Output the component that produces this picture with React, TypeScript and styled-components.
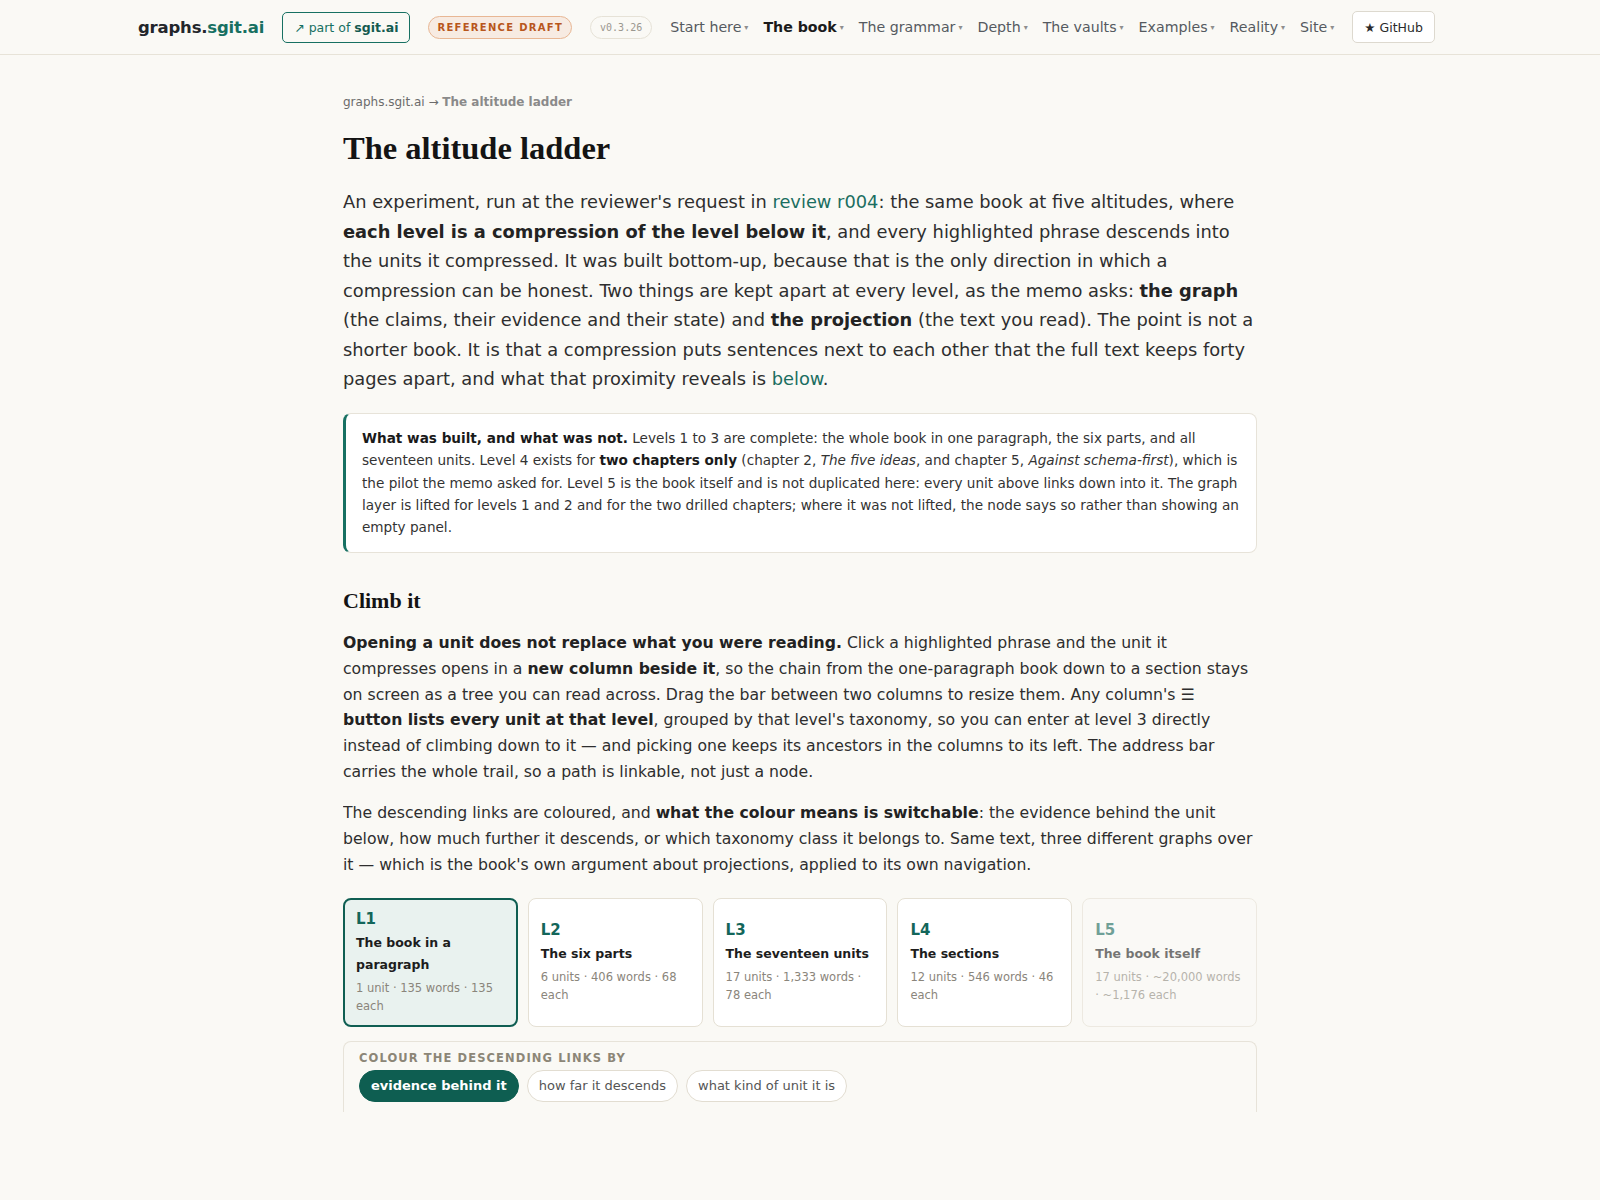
import React, { useState } from "react";
import styled, { createGlobalStyle } from "styled-components";

const GlobalStyle = createGlobalStyle`
  html, body {
    margin: 0;
    padding: 0;
    background: #faf9f5;
  }
  body {
    font-family: "DejaVu Sans", "Noto Sans", sans-serif;
    color: #2b2b2b;
  }
  * { box-sizing: border-box; }
`;

const NAV = [
  { label: "Start here" },
  { label: "The book", active: true },
  { label: "The grammar" },
  { label: "Depth" },
  { label: "The vaults" },
  { label: "Examples" },
  { label: "Reality" },
  { label: "Site" },
];

const LEVELS = [
  { id: "L1", title: "The book in a paragraph", meta: "1 unit · 135 words · 135 each" },
  { id: "L2", title: "The six parts", meta: "6 units · 406 words · 68 each" },
  { id: "L3", title: "The seventeen units", meta: "17 units · 1,333 words · 78 each" },
  { id: "L4", title: "The sections", meta: "12 units · 546 words · 46 each" },
  { id: "L5", title: "The book itself", meta: "17 units · ~20,000 words · ~1,176 each", faded: true },
];

const MODES = ["evidence behind it", "how far it descends", "what kind of unit it is"];

function App() {
  const [level, setLevel] = useState("L1");
  const [mode, setMode] = useState(MODES[0]);

  return (
    <>
      <GlobalStyle />
      <Header>
        <HeaderInner>
          <Logo>
            graphs.<LogoAccent>sgit.ai</LogoAccent>
          </Logo>
          <PartOf href="#">
            ↗ part of <b>sgit.ai</b>
          </PartOf>
          <DraftBadge>REFERENCE DRAFT</DraftBadge>
          <VersionBadge>v0.3.26</VersionBadge>
          <Nav>
            {NAV.map((n) => (
              <NavItem key={n.label} active={!!n.active}>
                {n.label}
                <Caret>▾</Caret>
              </NavItem>
            ))}
          </Nav>
          <GitHubButton href="#">★ GitHub</GitHubButton>
        </HeaderInner>
      </Header>

      <Main>
        <Breadcrumb>
          graphs.sgit.ai → <b>The altitude ladder</b>
        </Breadcrumb>
        <Title>The altitude ladder</Title>

        <Lead>
          An experiment, run at the reviewer's request in <Link href="#">review r004</Link>: the
          same book at five altitudes, where <b>each level is a compression of the level below it</b>,
          and every highlighted phrase descends into the units it compressed. It was built
          bottom-up, because that is the only direction in which a compression can be honest. Two
          things are kept apart at every level, as the memo asks: <b>the graph</b> (the claims,
          their evidence and their state) and <b>the projection</b> (the text you read). The point
          is not a shorter book. It is that a compression puts sentences next to each other that
          the full text keeps forty pages apart, and what that proximity reveals is{" "}
          <Link href="#">below</Link>.
        </Lead>

        <Callout>
          <b>What was built, and what was not.</b> Levels 1 to 3 are complete: the whole book in one
          paragraph, the six parts, and all seventeen units. Level 4 exists for{" "}
          <b>two chapters only</b> (chapter 2, <i>The five ideas</i>, and chapter 5,{" "}
          <i>Against schema-first</i>), which is the pilot the memo asked for. Level 5 is the book
          itself and is not duplicated here: every unit above links down into it. The graph layer is
          lifted for levels 1 and 2 and for the two drilled chapters; where it was not lifted, the
          node says so rather than showing an empty panel.
        </Callout>

        <SectionTitle>Climb it</SectionTitle>

        <Para>
          <b>Opening a unit does not replace what you were reading.</b> Click a highlighted phrase
          and the unit it compresses opens in a <b>new column beside it</b>, so the chain from the
          one-paragraph book down to a section stays on screen as a tree you can read across. Drag
          the bar between two columns to resize them. Any column's ☰{" "}
          <b>button lists every unit at that level</b>, grouped by that level's taxonomy, so you can
          enter at level 3 directly instead of climbing down to it — and picking one keeps its
          ancestors in the columns to its left. The address bar carries the whole trail, so a path
          is linkable, not just a node.
        </Para>
        <Para>
          The descending links are coloured, and <b>what the colour means is switchable</b>: the
          evidence behind the unit below, how much further it descends, or which taxonomy class it
          belongs to. Same text, three different graphs over it — which is the book's own argument
          about projections, applied to its own navigation.
        </Para>

        <LevelGrid>
          {LEVELS.map((l) => (
            <LevelCard
              key={l.id}
              selected={level === l.id}
              faded={!!l.faded}
              onClick={() => setLevel(l.id)}
            >
              <LevelId>{l.id}</LevelId>
              <LevelTitle>{l.title}</LevelTitle>
              <LevelMeta>{l.meta}</LevelMeta>
            </LevelCard>
          ))}
        </LevelGrid>

        <ColourPanel>
          <PanelLabel>Colour the descending links by</PanelLabel>
          <PillRow>
            {MODES.map((m) => (
              <Pill key={m} active={mode === m} onClick={() => setMode(m)}>
                {m}
              </Pill>
            ))}
          </PillRow>
        </ColourPanel>
      </Main>
    </>
  );
}

const Header = styled.header`
  height: 55px;
  border-bottom: 1px solid #e7e3d8;
  background: #faf9f5;
`;

const HeaderInner = styled.div`
  height: 100%;
  padding: 0 138px;
  display: flex;
  align-items: center;
  gap: 18px;
  white-space: nowrap;
  & > * {
    flex-shrink: 0;
  }
`;

const Logo = styled.div`
  font-size: 16.5px;
  font-weight: 700;
  color: #23262b;
  letter-spacing: -0.2px;
`;

const LogoAccent = styled.span`
  color: #177062;
`;

const PartOf = styled.a`
  height: 31px;
  padding: 0 11px;
  display: flex;
  align-items: center;
  gap: 4px;
  border: 1px solid #177062;
  border-radius: 5px;
  color: #177062;
  font-size: 12.5px;
  text-decoration: none;
  b {
    color: #145a50;
  }
`;

const DraftBadge = styled.span`
  height: 23px;
  padding: 0 8px;
  display: flex;
  align-items: center;
  border: 1px solid #e8b794;
  background: #f7ebe2;
  border-radius: 12px;
  color: #b8561c;
  font-size: 10px;
  font-weight: 700;
  letter-spacing: 1.3px;
`;

const VersionBadge = styled.span`
  height: 23px;
  padding: 0 9px;
  display: flex;
  align-items: center;
  border: 1px solid #e6e2d7;
  border-radius: 12px;
  color: #9a978f;
  font-family: "DejaVu Sans Mono", "Liberation Mono", monospace;
  font-size: 10px;
`;

const Nav = styled.nav`
  display: flex;
  align-items: center;
  gap: 15px;
`;

const NavItem = styled.span<{ active: boolean }>`
  font-size: 14.2px;
  color: ${(p) => (p.active ? "#1b1b1b" : "#555a60")};
  font-weight: ${(p) => (p.active ? 700 : 400)};
  cursor: pointer;
`;

const Caret = styled.span`
  font-size: 8px;
  margin-left: 3px;
  color: #8e8e8e;
  vertical-align: 2px;
  font-weight: 400;
`;

const GitHubButton = styled.a`
  height: 32px;
  padding: 0 11px;
  display: flex;
  align-items: center;
  border: 1px solid #ddd9cf;
  border-radius: 5px;
  background: #fff;
  color: #2a2a2a;
  font-size: 12.5px;
  text-decoration: none;
`;

const Main = styled.main`
  width: 914px;
  margin: 0 auto;
  padding-top: 40px;
  height: 1057px;
  overflow: hidden;
`;

const Breadcrumb = styled.div`
  font-size: 12px;
  color: #6b6b6b;
  b {
    color: #8a8a8a;
  }
`;

const Title = styled.h1`
  margin: 20px 0 19px;
  font-family: "Liberation Serif", "Times New Roman", serif;
  font-size: 32.5px;
  font-weight: 700;
  color: #141414;
  line-height: 1.2;
`;

const Lead = styled.p`
  margin: 0 0 19px;
  font-size: 17.84px;
  line-height: 1.655;
  color: #2e2e2e;
  b {
    color: #232323;
  }
`;

const Link = styled.a`
  color: #1a6e61;
  text-decoration: none;
`;

const Callout = styled.div`
  background: #fff;
  border: 1px solid #e7e3d9;
  border-left: 3px solid #177062;
  border-radius: 8px;
  padding: 13px 17px 13px 16px;
  font-size: 13.6px;
  line-height: 1.65;
  color: #333;
  b {
    color: #1a1a1a;
  }
`;

const SectionTitle = styled.h2`
  margin: 35px 0 16px;
  font-family: "Liberation Serif", "Times New Roman", serif;
  font-size: 22px;
  font-weight: 700;
  color: #141414;
`;

const Para = styled.p`
  margin: 0 0 15px;
  font-size: 15.68px;
  line-height: 1.65;
  color: #2e2e2e;
  b {
    color: #222;
  }
`;

const LevelGrid = styled.div`
  margin-top: 20px;
  display: grid;
  grid-template-columns: repeat(5, 1fr);
  gap: 10px;
`;

const LevelCard = styled.div<{ selected: boolean; faded: boolean }>`
  min-height: 126px;
  padding: ${(p) => (p.selected ? "9px 11px" : "10px 12px")};
  display: flex;
  flex-direction: column;
  justify-content: center;
  border: ${(p) => (p.selected ? "2px solid #0f5e52" : "1px solid #e5e0d4")};
  border-radius: 8px;
  background: ${(p) => (p.selected ? "#e9f2ef" : p.faded ? "#fbfaf7" : "#fff")};
  cursor: pointer;
  opacity: ${(p) => (p.faded ? 0.6 : 1)};
`;

const LevelId = styled.div`
  font-size: 15px;
  font-weight: 700;
  color: #13665a;
  line-height: 1.35;
  margin-bottom: 3px;
`;

const LevelTitle = styled.div`
  font-size: 12.5px;
  font-weight: 700;
  color: #1d1d1d;
  line-height: 1.8;
  margin-bottom: 2px;
`;

const LevelMeta = styled.div`
  font-size: 11.5px;
  color: #8a857b;
  line-height: 1.6;
`;

const ColourPanel = styled.div`
  margin-top: 14px;
  padding: 9px 15px 12px;
  border: 1px solid #e7e3d9;
  border-bottom: none;
  border-radius: 8px 8px 0 0;
  height: 80px;
`;

const PanelLabel = styled.div`
  font-size: 11.5px;
  font-weight: 700;
  letter-spacing: 1.1px;
  text-transform: uppercase;
  color: #8c8677;
  margin-bottom: 5px;
`;

const PillRow = styled.div`
  display: flex;
  gap: 8px;
`;

const Pill = styled.button<{ active: boolean }>`
  height: 32px;
  padding: 0 11px;
  border-radius: 16px;
  border: 1px solid ${(p) => (p.active ? "#0e5e51" : "#e2ddd1")};
  background: ${(p) => (p.active ? "#0e5e51" : "#fff")};
  color: ${(p) => (p.active ? "#fff" : "#555")};
  font-family: "DejaVu Sans", sans-serif;
  font-size: 13px;
  font-weight: ${(p) => (p.active ? 700 : 400)};
  cursor: pointer;
`;

export default App;
